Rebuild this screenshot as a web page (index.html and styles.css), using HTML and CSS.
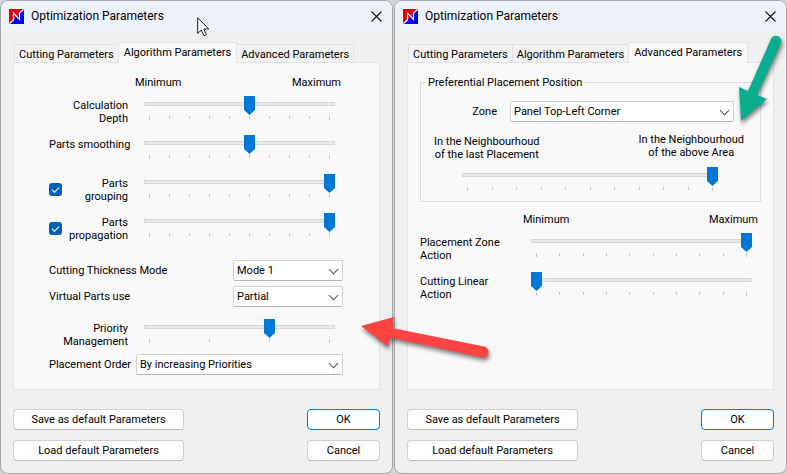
FILE: index.html
```
<!DOCTYPE html>
<html lang="en">

<head>
    <meta charset="UTF-8">
    <meta name="viewport" content="width=device-width, initial-scale=1.0">
    <title>Optimization Parameters</title>
    <link rel="stylesheet" href="styles.css">
</head>

<body>

<svg class="defs" width="0" height="0">
    <symbol id="logo" viewBox="0 0 15 15">
        <path d="M0 0h15L0 15z" fill="#e3000b"/>
        <path d="M15 0v15H0z" fill="#0000f0"/>
        <path d="M.5 14.500L4.500 11V4L10.500 10.500V4L14.500 .5" fill="none" stroke="#fff" stroke-width="1.2"/>
    </symbol>
    <symbol id="close" viewBox="0 0 11 11">
        <path d="M.5 .5l10 10M10.5 .5l-10 10" fill="none" stroke="#111" stroke-width="1.1"/>
    </symbol>
</svg>

<main class="screen">

    <!-- Algorithm Parameters -->
    <form class="dialog">
        <header class="titlebar">
            <svg class="logo"><use href="#logo"/></svg>
            <h1>Optimization Parameters</h1>
            <button type="button" class="close" aria-label="Close"><svg><use href="#close"/></svg></button>
        </header>
        <nav class="tabs">
            <button type="button" class="tab">Cutting Parameters</button>
            <button type="button" class="tab active">Algorithm Parameters</button>
            <button type="button" class="tab">Advanced Parameters</button>
        </nav>
        <section class="panel algorithm">
            <div class="scale"><span>Minimum</span><span>Maximum</span></div>
            <div class="row">
                <label class="name" for="depth">Calculation<br>Depth</label>
                <div class="slider">
                    <input type="range" id="depth" min="0" max="9" value="5">
                    <div class="ticks"><i></i><i></i><i></i><i></i><i></i><i></i><i></i><i></i><i></i><i></i></div>
                </div>
            </div>
            <div class="row">
                <label class="name" for="smoothing">Parts smoothing</label>
                <div class="slider">
                    <input type="range" id="smoothing" min="0" max="9" value="5">
                    <div class="ticks"><i></i><i></i><i></i><i></i><i></i><i></i><i></i><i></i><i></i><i></i></div>
                </div>
            </div>
            <div class="row">
                <input type="checkbox" id="useGrouping" aria-label="Parts grouping" checked>
                <label class="name" for="grouping">Parts<br>grouping</label>
                <div class="slider">
                    <input type="range" id="grouping" min="0" max="9" value="9">
                    <div class="ticks"><i></i><i></i><i></i><i></i><i></i><i></i><i></i><i></i><i></i><i></i></div>
                </div>
            </div>
            <div class="row">
                <input type="checkbox" id="usePropagation" aria-label="Parts propagation" checked>
                <label class="name" for="propagation">Parts<br>propagation</label>
                <div class="slider">
                    <input type="range" id="propagation" min="0" max="9" value="9">
                    <div class="ticks"><i></i><i></i><i></i><i></i><i></i><i></i><i></i><i></i><i></i><i></i></div>
                </div>
            </div>
            <div class="modes">
                <div class="field">
                    <label for="thickness">Cutting Thickness Mode</label>
                    <span class="select short"><select id="thickness"><option>Mode 1</option></select></span>
                </div>
                <div class="field">
                    <label for="virtual">Virtual Parts use</label>
                    <span class="select short"><select id="virtual"><option>Partial</option></select></span>
                </div>
            </div>
            <div class="row">
                <label class="name" for="priority">Priority<br>Management</label>
                <div class="slider">
                    <input type="range" id="priority" min="0" max="3" value="2">
                    <div class="ticks"><i></i><i></i><i></i><i></i></div>
                </div>
            </div>
            <div class="field">
                <label for="order">Placement Order</label>
                <span class="select order"><select id="order"><option>By increasing Priorities</option></select></span>
            </div>
        </section>
        <footer class="buttons">
            <button type="button">Save as default Parameters</button>
            <button type="submit" class="ok">OK</button>
            <button type="button">Load default Parameters</button>
            <button type="button">Cancel</button>
        </footer>
    </form>

    <!-- Advanced Parameters -->
    <form class="dialog">
        <header class="titlebar">
            <svg class="logo"><use href="#logo"/></svg>
            <h1>Optimization Parameters</h1>
            <button type="button" class="close" aria-label="Close"><svg><use href="#close"/></svg></button>
        </header>
        <nav class="tabs">
            <button type="button" class="tab">Cutting Parameters</button>
            <button type="button" class="tab">Algorithm Parameters</button>
            <button type="button" class="tab active">Advanced Parameters</button>
        </nav>
        <section class="panel advanced">
            <fieldset>
                <legend>Preferential Placement Position</legend>
                <div class="zone">
                    <label for="zone">Zone</label>
                    <span class="select"><select id="zone"><option>Panel Top-Left Corner</option></select></span>
                </div>
                <div class="ends">
                    <label for="position">In the Neighbourhoud<br>of the last Placement</label>
                    <label for="position">In the Neighbourhoud<br>of the above Area</label>
                </div>
                <div class="slider">
                    <input type="range" id="position" min="0" max="10" value="10">
                    <div class="ticks"><i></i><i></i><i></i><i></i><i></i><i></i><i></i><i></i><i></i><i></i><i></i></div>
                </div>
            </fieldset>
            <div class="scale"><span>Minimum</span><span>Maximum</span></div>
            <div class="row">
                <label class="name" for="zoneAction">Placement Zone<br>Action</label>
                <div class="slider">
                    <input type="range" id="zoneAction" min="0" max="9" value="9">
                    <div class="ticks"><i></i><i></i><i></i><i></i><i></i><i></i><i></i><i></i><i></i><i></i></div>
                </div>
            </div>
            <div class="row">
                <label class="name" for="linearAction">Cutting Linear<br>Action</label>
                <div class="slider">
                    <input type="range" id="linearAction" min="0" max="9" value="0">
                    <div class="ticks"><i></i><i></i><i></i><i></i><i></i><i></i><i></i><i></i><i></i><i></i></div>
                </div>
            </div>
        </section>
        <footer class="buttons">
            <button type="button">Save as default Parameters</button>
            <button type="submit" class="ok">OK</button>
            <button type="button">Load default Parameters</button>
            <button type="button">Cancel</button>
        </footer>
    </form>

    <!-- annotations -->
    <svg class="pointer" viewBox="0 0 13 20">
        <path d="M.7 .8V16.5L4.3 13L7 18.8L9.4 17.6L6.8 12H11.8z" fill="#fff" stroke="#1b1b2b" stroke-width="1"/>
    </svg>
    <svg class="arrow red" viewBox="0 0 128 38">
        <path d="M0 10L33 1L31 12L123 30.5A5.5 5.5 0 0 1 121 41.5L29 21.5L27 30.5z" fill="#ff4343"/>
    </svg>
    <svg class="arrow green" viewBox="0 0 44 86">
        <path d="M2 85L0 51L9 55L32 3A5 5 0 0 1 42 7.500L18 59L28 63z" fill="#0aae8f"/>
    </svg>

</main>

</body>

</html>
```
FILE: styles.css
```
* {
    box-sizing: border-box;
}

body {
    margin: 0;
    background: #d4d4d4;
    color: #000;
    font: 11px/13px Roboto, Tahoma, sans-serif;
}

button, select {
    font: inherit;
    color: inherit;
}

.defs {
    position: absolute;
}

.screen {
    position: relative;
    display: grid;
    grid-template-columns: 1fr 1fr;
    gap: 1px;
    min-height: 100vh;
}

.dialog {
    display: flex;
    flex-direction: column;
    overflow: hidden;
    background: #f0f0f0;
    border: 1px solid #a6a6a6;
    border-radius: 8px;
}

/* title bar */

.titlebar {
    display: flex;
    align-items: center;
    height: 30px;
    padding: 0 10px 0 8px;
    background: #eef3fb;
}

.titlebar h1 {
    flex: 1;
    margin: 0 0 0 7px;
    font: 12px/16px Roboto, "Segoe UI", sans-serif;
}

.logo {
    width: 15px;
    height: 15px;
}

.close {
    display: flex;
    padding: 0;
    border: 0;
    background: none;
}

.close svg {
    width: 11px;
    height: 11px;
}

/* tabs */

.tabs {
    display: flex;
    align-items: flex-end;
    height: 31px;
    padding: 0 13px;
}

.tab {
    height: 18px;
    padding: 1px 4px 0;
    border: 1px solid #e3e3e3;
    border-width: 1px 1px 0 0;
    background: #f3f3f3;
    white-space: nowrap;
}

.tab:first-child {
    border-left-width: 1px;
}

.tab.active {
    position: relative;
    height: 21px;
    margin-bottom: -1px;
    padding: 0 5px 2px;
    background: #f9f9f9;
}

/* panel */

.panel {
    flex: 1;
    margin: 0 12px;
    background: #f9f9f9;
    border: 1px solid #e3e3e3;
}

.algorithm {
    padding: 13px 36px 0 35px;
}

.advanced {
    padding: 13px 12px 0;
}

.scale {
    display: flex;
    justify-content: space-between;
    height: 20px;
}

.algorithm .scale {
    margin: 0 2px 0 86px;
}

.advanced .scale {
    margin: 11px 3px 0 103px;
}

.row {
    position: relative;
    display: flex;
    height: 39px;
}

.name {
    width: 79px;
    padding-top: 3px;
    white-space: nowrap;
}

.algorithm .row {
    gap: 16px;
    padding-right: 8px;
}

.algorithm .name {
    text-align: right;
}

.advanced .row {
    padding-right: 9px;
}

.advanced .name {
    width: 111px;
}

.row > input[type=checkbox] {
    position: absolute;
    left: 0;
    top: 9px;
}

input[type=checkbox] {
    appearance: none;
    display: flex;
    align-items: center;
    justify-content: center;
    width: 13px;
    height: 13px;
    margin: 0;
    border-radius: 3px;
    background: #005fb8;
}

input[type=checkbox]:checked::after {
    content: "";
    width: 6px;
    height: 3px;
    margin-bottom: 2px;
    border: solid #fff;
    border-width: 0 0 1px 1px;
    transform: rotate(-45deg);
}

/* sliders */

.slider {
    flex: 1;
}

.slider input {
    appearance: none;
    display: block;
    width: 100%;
    height: 19px;
    margin: 0 0 1px;
    background: none;
}

.slider input::-webkit-slider-runnable-track {
    height: 19px;
    background:
        linear-gradient(#e7eaea, #e7eaea) 1px 7px / calc(100% - 2px) 2px no-repeat,
        linear-gradient(#d6d6d6, #d6d6d6) 0 6px / 100% 4px no-repeat;
}

.slider input::-webkit-slider-thumb {
    appearance: none;
    width: 11px;
    height: 19px;
    background: #0078d7;
    clip-path: polygon(0 0, 100% 0, 100% 14px, 50% 100%, 0 14px);
}

.ticks {
    display: flex;
    justify-content: space-between;
    padding: 0 5px;
}

.ticks i {
    width: 1px;
    height: 3px;
    background: #c4c4c4;
}

.ticks i:first-child,
.ticks i:last-child {
    height: 4px;
}

/* drop-downs */

.modes {
    display: grid;
    gap: 5px;
    margin: 8px 0 12px;
}

.field {
    display: flex;
    align-items: center;
    justify-content: space-between;
    white-space: nowrap;
}

.algorithm > .field {
    margin-top: -4px;
}

.select {
    position: relative;
    display: block;
}

.select.short {
    width: 110px;
}

.select.order {
    width: 207px;
}

.select::after {
    content: "";
    position: absolute;
    right: 6px;
    top: 6px;
    width: 6px;
    height: 6px;
    border: solid #555;
    border-width: 0 1px 1px 0;
    transform: rotate(45deg);
    pointer-events: none;
}

select {
    appearance: none;
    display: block;
    width: 100%;
    height: 21px;
    padding: 0 3px;
    border: 1px solid #d0d0d0;
    border-bottom-color: #b4b4b4;
    border-radius: 2px;
    background: #fff;
}

/* placement position group */

fieldset {
    margin: 0;
    padding: 12px 26px 10px 13px;
    border: 1px solid #dcdcdc;
}

legend {
    margin-left: -8px;
    padding: 0 2px;
}

.zone {
    display: flex;
    align-items: center;
    justify-content: flex-end;
    gap: 13px;
}

.zone .select {
    width: 224px;
}

.ends {
    display: flex;
    justify-content: space-between;
    height: 34px;
    margin: 11px -10px 0 0;
    text-align: center;
}

.ends label:first-child {
    padding-top: 2px;
}

fieldset .slider {
    margin: 0 16px 0 28px;
}

/* footer buttons */

.buttons {
    display: grid;
    grid-template-columns: 171px 73px;
    justify-content: space-between;
    gap: 10px;
    padding: 19px 12px 12px;
}

.buttons button {
    height: 21px;
    padding: 0;
    border: 1px solid #d0d0d0;
    border-bottom-color: #bcbcbc;
    border-radius: 4px;
    background: #fdfdfd;
}

.buttons .ok {
    border-color: #0078d4;
}

/* annotations lying over the dialogs */

.pointer,
.arrow {
    position: absolute;
    overflow: visible;
    pointer-events: none;
}

.pointer {
    left: 197px;
    top: 17px;
    width: 13px;
    height: 20px;
}

.arrow {
    filter: drop-shadow(1px 3px 2px rgba(0, 0, 0, 0.5));
}

.red {
    left: 361px;
    top: 316px;
    width: 128px;
    height: 38px;
}

.green {
    right: 4px;
    top: 36px;
    width: 44px;
    height: 86px;
}
```
